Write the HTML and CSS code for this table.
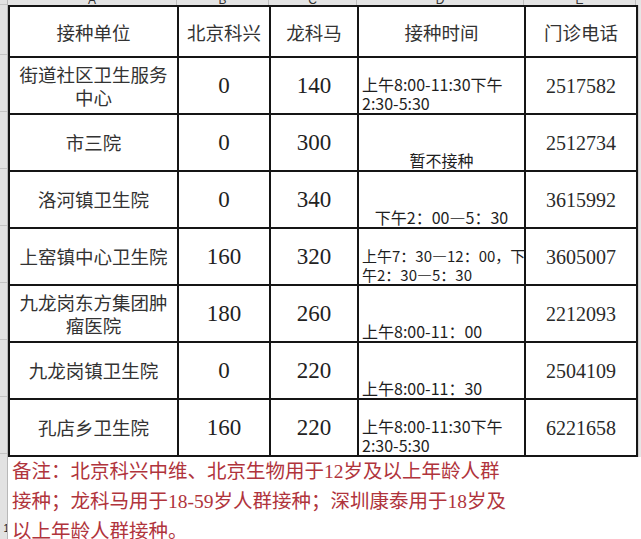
FILE: index.html
```html
<!DOCTYPE html>
<html lang="zh">
<head>
<meta charset="utf-8">
<title>接种单位</title>
<link rel="stylesheet" href="styles.css">
</head>
<body>
<div class="sheet">
  <div class="rowheads">
    <div class="rh rh-corner"></div>
    <div class="rh rh-head"></div>
    <div class="rh rh-row"></div>
    <div class="rh rh-row"></div>
    <div class="rh rh-row"></div>
    <div class="rh rh-row"></div>
    <div class="rh rh-row"></div>
    <div class="rh rh-row"></div>
    <div class="rh rh-row"></div>
    <div class="rh rh-last"><span>1</span></div>
  </div>
  <div class="main">
    <div class="colheads">
      <div class="ch ch-a"><span>A</span></div>
      <div class="ch ch-b"><span>B</span></div>
      <div class="ch ch-c"><span>C</span></div>
      <div class="ch ch-d"><span>D</span></div>
      <div class="ch ch-e"><span>E</span></div>
      <div class="ch ch-f"></div>
    </div>
    <div class="grid-area">
      <table class="tbl">
        <colgroup>
          <col class="c-a"><col class="c-b"><col class="c-c"><col class="c-d"><col class="c-e">
        </colgroup>
        <thead>
          <tr class="head-row">
            <th>接种单位</th>
            <th>北京科兴</th>
            <th>龙科马</th>
            <th>接种时间</th>
            <th>门诊电话</th>
          </tr>
        </thead>
        <tbody>
          <tr>
            <td class="name">街道社区卫生服务<br>中心</td>
            <td class="num">0</td>
            <td class="num">140</td>
            <td class="time"><span class="tl">上午8:00-11:30下午</span><span class="tl">2:30-5:30</span></td>
            <td class="tel">2517582</td>
          </tr>
          <tr>
            <td class="name">市三院</td>
            <td class="num">0</td>
            <td class="num">300</td>
            <td class="time center"><span class="tl">暂不接种</span></td>
            <td class="tel">2512734</td>
          </tr>
          <tr>
            <td class="name">洛河镇卫生院</td>
            <td class="num">0</td>
            <td class="num">340</td>
            <td class="time center"><span class="tl">下午2：00—5：30</span></td>
            <td class="tel">3615992</td>
          </tr>
          <tr>
            <td class="name">上窑镇中心卫生院</td>
            <td class="num">160</td>
            <td class="num">320</td>
            <td class="time narrow"><span class="tl">上午7：30—12：00，下</span><span class="tl">午2：30—5：30</span></td>
            <td class="tel">3605007</td>
          </tr>
          <tr>
            <td class="name">九龙岗东方集团肿<br>瘤医院</td>
            <td class="num">180</td>
            <td class="num">260</td>
            <td class="time"><span class="tl">上午8:00-11：00</span></td>
            <td class="tel">2212093</td>
          </tr>
          <tr>
            <td class="name">九龙岗镇卫生院</td>
            <td class="num">0</td>
            <td class="num">220</td>
            <td class="time"><span class="tl">上午8:00-11：30</span></td>
            <td class="tel">2504109</td>
          </tr>
          <tr>
            <td class="name">孔店乡卫生院</td>
            <td class="num">160</td>
            <td class="num">220</td>
            <td class="time"><span class="tl">上午8:00-11:30下午</span><span class="tl">2:30-5:30</span></td>
            <td class="tel">6221658</td>
          </tr>
        </tbody>
      </table>
      <div class="filler"></div>
    </div>
    <p class="note">备注：北京科兴中维、北京生物用于12岁及以上年龄人群<br>接种；龙科马用于18-59岁人群接种；深圳康泰用于18岁及<br>以上年龄人群接种。</p>
  </div>
</div>
</body>
</html>
```

FILE: styles.css
```css
html, body {
  margin: 0;
  padding: 0;
  background: #ffffff;
}

.sheet {
  width: 641px;
  height: 539px;
  overflow: hidden;
  display: flex;
  background: #ffffff;
}

/* left row-header strip */
.rowheads {
  width: 8px;
  flex: none;
  display: flex;
  flex-direction: column;
  background: #e2e2e2;
  border-right: 1px solid #b8b8b8;
  box-sizing: border-box;
}
.rh {
  box-sizing: border-box;
  border-bottom: 1px solid #c4c4c4;
}
.rh-corner { height: 5px; }
.rh-head { height: 50px; }
.rh-row { height: 57px; }
.rh-last {
  flex: 1;
  border-bottom: none;
  display: flex;
  align-items: flex-end;
  justify-content: flex-end;
  overflow: hidden;
}
.rh-last span {
  font: 10px/12px "Liberation Sans", sans-serif;
  color: #222;
  margin-right: -2px;
  margin-bottom: 4px;
}

.main {
  flex: 1;
  display: flex;
  flex-direction: column;
  min-width: 0;
}

/* top column-header strip */
.colheads {
  height: 5px;
  flex: none;
  display: flex;
  background: #e4e4e4;
  overflow: hidden;
}
.ch {
  box-sizing: border-box;
  border-right: 1px solid #bdbdbd;
  display: flex;
  align-items: flex-end;
  justify-content: center;
  overflow: hidden;
}
.ch span {
  font: 12px/9px "Liberation Sans", sans-serif;
  color: #333;
}
.ch-a { width: 169px; }
.ch-b { width: 92px; }
.ch-c { width: 88px; }
.ch-d { width: 167px; }
.ch-e { width: 112px; }
.ch-f { flex: 1; border-right: none; }

.grid-area {
  display: flex;
  flex: none;
}
.filler {
  flex: 1;
  background: #e6e6e6;
  border-left: 1px solid #cfcfcf;
}

.tbl {
  width: 628px;
  flex: none;
  table-layout: fixed;
  border-collapse: collapse;
  background: #ffffff;
  color: #2b2b2b;
}
.c-a { width: 169px; }
.c-b { width: 92px; }
.c-c { width: 88px; }
.c-d { width: 167px; }
.c-e { width: 112px; }

.tbl th, .tbl td {
  border: 2px solid #151515;
  padding: 0;
  text-align: center;
  vertical-align: middle;
  overflow: hidden;
}
.head-row { height: 51px; }
.head-row th {
  font: 400 18.5px/24px "Noto Sans CJK SC", sans-serif;
  color: #333;
}
.tbl tbody tr { height: 57px; }

.name {
  font: 400 18.5px/23px "Noto Sans CJK SC", sans-serif;
  color: #333;
}
.num {
  font: 400 23px/26px "Liberation Serif", "Times New Roman", serif;
  color: #222;
}
.tel {
  font: 400 20px/24px "Liberation Serif", "Times New Roman", serif;
  color: #2a2a2a;
}
.tbl td.time {
  text-align: left;
  vertical-align: bottom;
  padding: 0 0 0 3px;
  white-space: nowrap;
  font: 400 16px/19px "Noto Sans CJK SC", sans-serif;
  color: #1e1e1e;
}
.tl {
  display: block;
}
.tbl td.time.center {
  text-align: center;
  padding-left: 0;
}
.tbl td.time.narrow {
  font-size: 15px;
}

.note {
  margin: 0;
  padding: 0 0 0 4px;
  font: 400 19.5px/30px "Liberation Serif", "Noto Sans CJK SC", serif;
  color: #b0343c;
  white-space: nowrap;
}
```
